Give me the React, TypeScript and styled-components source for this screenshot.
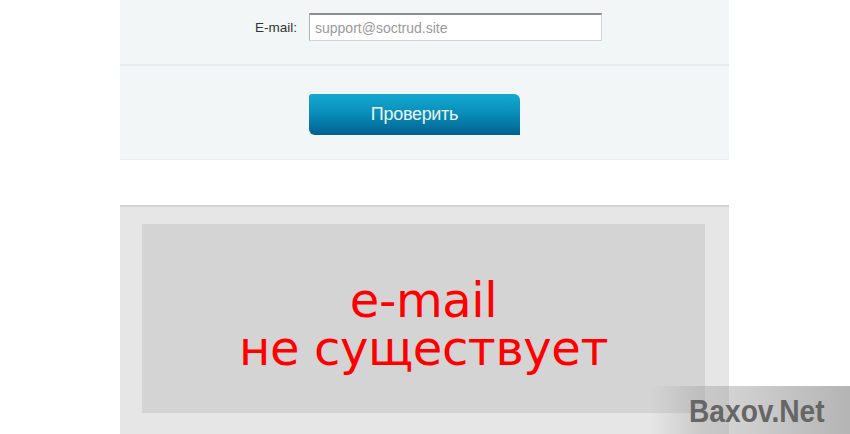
import React from "react";
import styled, { createGlobalStyle } from "styled-components";

const GlobalStyle = createGlobalStyle`
  html, body {
    margin: 0;
    padding: 0;
    background: #ffffff;
    height: 100%;
  }
  #root {
    height: 100%;
  }
  * { box-sizing: border-box; }
`;

const Page = styled.div`
  position: relative;
  width: 850px;
  height: 434px;
  overflow: hidden;
  background: #ffffff;
`;

const Column = styled.div`
  width: 609px;
  margin-left: 120px;
  display: flex;
  flex-direction: column;
  height: 100%;
`;

const FormPanel = styled.div`
  background: #f3f6f7;
  border-bottom: 1px solid #e7eced;
  display: flex;
  flex-direction: column;
`;

const FieldRow = styled.div`
  display: grid;
  grid-template-columns: 177px 293px;
  column-gap: 12px;
  align-items: center;
  height: 66px;
  padding-top: 13px;
  padding-bottom: 23px;
  border-bottom: 2px solid #e4ecee;
`;

const Label = styled.label`
  justify-self: end;
  font-family: "Liberation Sans", Arial, sans-serif;
  font-size: 13.5px;
  color: #333333;
`;

const Input = styled.input`
  width: 293px;
  height: 28px;
  padding: 0 5px;
  border: 1px solid #d4d4d4;
  border-top: 2px solid #8e8e8e;
  border-left-color: #b3b3b3;
  background: #ffffff;
  font-family: "Liberation Sans", Arial, sans-serif;
  font-size: 14px;
  color: #999999;
  outline: none;
  &::placeholder { color: #9a9a9a; }
`;

const ActionRow = styled.div`
  height: 93px;
  padding-top: 28px;
  padding-left: 189px;
`;

const CheckButton = styled.button`
  width: 211px;
  height: 41px;
  border: none;
  border-radius: 3px 6px 0 6px;
  background: linear-gradient(to bottom, #13a9d0 0%, #0a8fbb 45%, #00618f 100%);
  color: #e9f5f9;
  font-family: "Liberation Sans", Arial, sans-serif;
  font-size: 18px;
  letter-spacing: -0.3px;
  cursor: pointer;
  padding: 0;
`;

const Gap = styled.div`
  height: 45px;
  flex: none;
`;

const ResultSection = styled.div`
  flex: 1;
  background: #e6e6e6;
  border-top: 2px solid #d3d3d3;
  padding: 17px 24px 0 22px;
`;

const ResultBox = styled.div`
  height: 189px;
  background: #d4d4d4;
  display: flex;
  flex-direction: column;
  align-items: center;
  justify-content: center;
  padding-top: 10px;
`;

const ResultText = styled.div`
  font-family: "DejaVu Sans", Verdana, sans-serif;
  font-size: 48px;
  line-height: 48px;
  color: #ff0000;
  letter-spacing: -0.4px;
  text-align: center;
`;

const Watermark = styled.div`
  position: absolute;
  right: 0;
  bottom: 0;
  width: 200px;
  height: 48px;
  background: linear-gradient(
    to right,
    rgba(150, 150, 150, 0) 0%,
    rgba(150, 150, 150, 0.35) 25%,
    rgba(130, 130, 130, 0.6) 100%
  );
  display: flex;
  align-items: center;
  padding-left: 39px;
  padding-top: 2px;
`;

const WatermarkText = styled.span`
  display: inline-block;
  font-family: "Liberation Sans", Arial, sans-serif;
  font-weight: bold;
  font-size: 32px;
  color: #666666;
  transform: scaleX(0.88);
  transform-origin: left center;
  white-space: nowrap;
`;

export default function App() {
  return (
    <>
      <GlobalStyle />
      <Page>
        <Column>
          <FormPanel>
            <FieldRow>
              <Label htmlFor="email">E-mail:</Label>
              <Input id="email" placeholder="support@soctrud.site" />
            </FieldRow>
            <ActionRow>
              <CheckButton>Проверить</CheckButton>
            </ActionRow>
          </FormPanel>
          <Gap />
          <ResultSection>
            <ResultBox>
              <ResultText>
                e-mail
                <br />
                не существует
              </ResultText>
            </ResultBox>
          </ResultSection>
        </Column>
        <Watermark>
          <WatermarkText>Baxov.Net</WatermarkText>
        </Watermark>
      </Page>
    </>
  );
}
